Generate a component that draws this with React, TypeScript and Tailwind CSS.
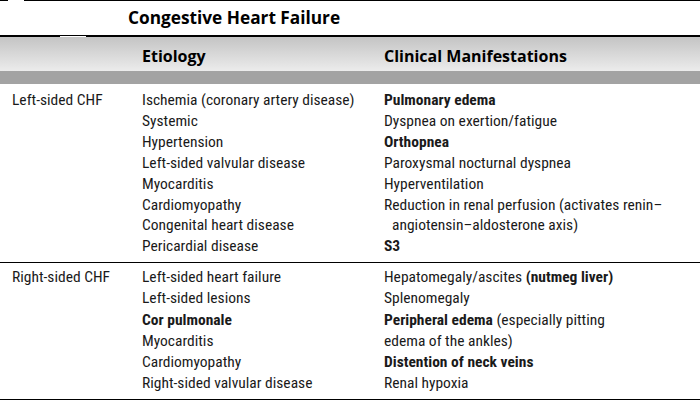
type Line = { text: React.ReactNode; indent?: boolean };

function Cell({ lines }: { lines: Line[] }) {
  return (
    <div className="flex flex-col">
      {lines.map((l, i) => (
        <div key={i} className={l.indent ? 'pl-[8px]' : ''}>
          {l.text}
        </div>
      ))}
    </div>
  );
}

const leftEtiology: Line[] = [
  { text: 'Ischemia (coronary artery disease)' },
  { text: 'Systemic' },
  { text: 'Hypertension' },
  { text: 'Left-sided valvular disease' },
  { text: 'Myocarditis' },
  { text: 'Cardiomyopathy' },
  { text: 'Congenital heart disease' },
  { text: 'Pericardial disease' },
];

const leftManifest: Line[] = [
  { text: <b>Pulmonary edema</b> },
  { text: 'Dyspnea on exertion/fatigue' },
  { text: <b>Orthopnea</b> },
  { text: 'Paroxysmal nocturnal dyspnea' },
  { text: 'Hyperventilation' },
  { text: 'Reduction in renal perfusion (activates renin–' },
  { text: 'angiotensin–aldosterone axis)', indent: true },
  { text: <b>S3</b> },
];

const rightEtiology: Line[] = [
  { text: 'Left-sided heart failure' },
  { text: 'Left-sided lesions' },
  { text: <b>Cor pulmonale</b> },
  { text: 'Myocarditis' },
  { text: 'Cardiomyopathy' },
  { text: 'Right-sided valvular disease' },
];

const rightManifest: Line[] = [
  { text: <>Hepatomegaly/ascites <b>(nutmeg liver)</b></> },
  { text: 'Splenomegaly' },
  { text: <><b>Peripheral edema</b> (especially pitting</> },
  { text: 'edema of the ankles)' },
  { text: <b>Distention of neck veins</b> },
  { text: 'Renal hypoxia' },
];

export default function App() {
  return (
    <div className="w-[700px] h-[401px] bg-white text-[#1a1a1a] overflow-hidden">
      {/* top rule */}
      <div className="flex h-px">
        <div className="w-[8px] bg-black" />
        <div className="w-[16px]" />
        <div className="flex-1 bg-black" />
      </div>

      <div className="h-[34px] pl-[128px] pt-[4px]">
        <h1 className="font-['Open_Sans',sans-serif] text-[17.25px] font-bold leading-[26px] text-black">
          Congestive Heart Failure
        </h1>
      </div>

      {/* heavy rule */}
      <div className="flex h-[2px]">
        <div className="w-[60px] bg-black" />
        <div className="w-[26px] flex flex-col">
          <div className="h-px bg-black" />
        </div>
        <div className="flex-1 bg-black" />
      </div>

      <div className="h-[34px] grid grid-cols-[142px_242px_1fr] items-end pb-[4px] bg-gradient-to-b from-[#c4c4c4] to-[#ececec] font-['Open_Sans',sans-serif] text-[16px] leading-[22px] font-bold text-black">
        <div />
        <div>Etiology</div>
        <div>Clinical Manifestations</div>
      </div>
      <div className="h-[13px] bg-[#a3a3a3]" />

      <div className="font-['Roboto_Condensed','Roboto',sans-serif] text-[15.5px]">
        <div className="grid grid-cols-[142px_242px_1fr] pt-[6px] h-[179px] leading-[20.9px] border-b border-black">
          <div className="pl-[12px]">Left-sided CHF</div>
          <Cell lines={leftEtiology} />
          <Cell lines={leftManifest} />
        </div>
        <div className="grid grid-cols-[142px_242px_1fr] pt-[4px] h-[137px] leading-[21.3px] border-b border-black">
          <div className="pl-[12px]">Right-sided CHF</div>
          <Cell lines={rightEtiology} />
          <Cell lines={rightManifest} />
        </div>
      </div>
    </div>
  );
}
